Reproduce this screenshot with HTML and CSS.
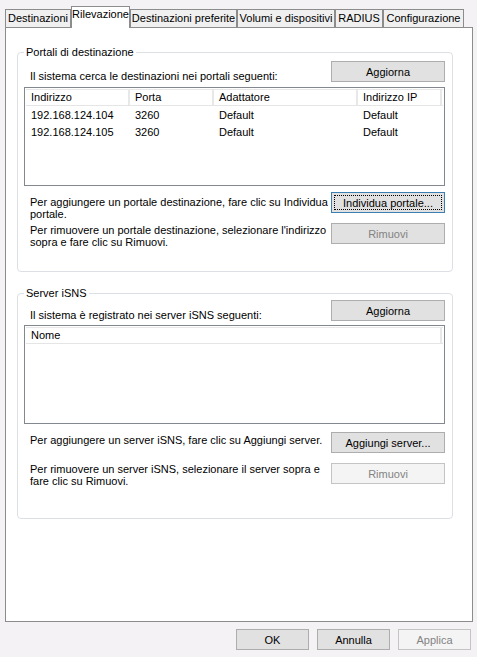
FILE: index.html
```html
<!DOCTYPE html>
<html lang="it">
<head>
<meta charset="utf-8">
<title>Proprietà Iniziatore iSCSI</title>
<link rel="stylesheet" href="styles.css">
</head>
<body>
<div class="dialog">
  <div class="tabs">
    <div class="tab t1">Destinazioni</div>
    <div class="tab t2 active">Rilevazione</div>
    <div class="tab t3">Destinazioni preferite</div>
    <div class="tab t4">Volumi e dispositivi</div>
    <div class="tab t5">RADIUS</div>
    <div class="tab t6">Configurazione</div>
  </div>
  <div class="panel">
    <fieldset class="group g1">
      <legend>Portali di destinazione</legend>
      <div class="row top-row r1">
        <span class="label">Il sistema cerca le destinazioni nei portali seguenti:</span>
        <button class="btn">Aggiorna</button>
      </div>
      <div class="list list-a">
        <div class="lrow lhead cols4">
          <span class="cell">Indirizzo</span>
          <span class="cell">Porta</span>
          <span class="cell">Adattatore</span>
          <span class="cell">Indirizzo IP</span>
        </div>
        <div class="lrow cols4">
          <span class="cell">192.168.124.104</span>
          <span class="cell">3260</span>
          <span class="cell">Default</span>
          <span class="cell">Default</span>
        </div>
        <div class="lrow cols4">
          <span class="cell">192.168.124.105</span>
          <span class="cell">3260</span>
          <span class="cell">Default</span>
          <span class="cell">Default</span>
        </div>
      </div>
      <div class="row action-row first-a">
        <span class="label text-a">Per aggiungere un portale destinazione, fare clic su Individua<br>portale.</span>
        <button class="btn focused"><span class="focus-rect">Individua portale...</span></button>
      </div>
      <div class="row action-row gap10">
        <span class="label text-b">Per rimuovere un portale destinazione, selezionare l'indirizzo<br>sopra e fare clic su Rimuovi.</span>
        <button class="btn dim">Rimuovi</button>
      </div>
    </fieldset>

    <fieldset class="group g2">
      <legend>Server iSNS</legend>
      <div class="row top-row r2">
        <span class="label">Il sistema è registrato nei server iSNS seguenti:</span>
        <button class="btn">Aggiorna</button>
      </div>
      <div class="list">
        <div class="lrow lhead cols1">
          <span class="cell">Nome</span>
        </div>
      </div>
      <div class="row action-row">
        <span class="label text-c">Per aggiungere un server iSNS, fare clic su Aggiungi server.</span>
        <button class="btn">Aggiungi server...</button>
      </div>
      <div class="row action-row gap10">
        <span class="label text-d">Per rimuovere un server iSNS, selezionare il server sopra e<br>fare clic su Rimuovi.</span>
        <button class="btn disabled">Rimuovi</button>
      </div>
    </fieldset>
  </div>
  <div class="footer">
    <button class="btn fbtn">OK</button>
    <button class="btn fbtn">Annulla</button>
    <button class="btn fbtn disabled">Applica</button>
  </div>
</div>
</body>
</html>
```

FILE: styles.css
```css
* { box-sizing: border-box; }

html, body {
  margin: 0;
  padding: 0;
  background: #f5f2f5;
}

body {
  font-family: "Liberation Sans", Arial, sans-serif;
  font-size: 11px;
  color: #000;
  width: 477px;
  height: 657px;
  overflow: hidden;
}

.dialog {
  display: flex;
  flex-direction: column;
}

/* Tabs */
.tabs {
  display: flex;
  align-items: flex-end;
  height: 27px;
  padding-left: 5px;
}

.tab {
  height: 18px;
  border: 1px solid #8c8c8c;
  border-bottom: none;
  background: #f0f0f0;
  line-height: 16px;
  text-align: center;
  white-space: nowrap;
}

.tab.active {
  height: 22px;
  margin-bottom: -1px;
  background: #fff;
  position: relative;
  z-index: 2;
  line-height: 15px;
}

.t1 { width: 66px; }
.t2 { width: 59px; }
.t3 { width: 107px; }
.t4 { width: 98px; }
.t5 { width: 48px; }
.t6 { width: 81px; }

/* Panel */
.panel {
  margin-left: 5px;
  width: 468px;
  height: 595px;
  border: 1px solid #8c8c8c;
  background: #fff;
  padding: 18px 0 0 11px;
  position: relative;
  z-index: 1;
}

.group {
  width: 436px;
  margin: 0;
  padding: 0 7px 27px 6px;
  border: 1px solid #dcdfe4;
  border-radius: 4px;
  min-width: 0;
}

.group legend {
  padding: 0 2px;
  line-height: 13px;
  height: 13px;
}

.g2 {
  margin-top: 15px;
  padding-bottom: 34px;
}

.row {
  display: flex;
  justify-content: space-between;
  white-space: nowrap;
}

.top-row { align-items: flex-end; }
.r1 { margin-top: 2px; }
.r2 { margin-top: 0; }

.top-row .label {
  line-height: 13px;
  margin-bottom: -1px;
}

.label {
  padding-left: 6px;
  line-height: 12px;
}

.action-row {
  align-items: flex-start;
  height: 21px;
  margin-top: 8px;
}

.action-row.first-a { margin-top: 6px; }
.action-row.gap10 { margin-top: 10px; }

.text-a { margin-top: 4px; }
.text-b { margin-top: 1px; }
.text-c { margin-top: 2px; }
.text-d { margin-top: 0; }

/* Buttons */
.btn {
  flex: none;
  width: 114px;
  height: 21px;
  padding: 0;
  border: 1px solid #adadad;
  background: #e1e1e1;
  font-family: inherit;
  font-size: 11px;
  color: #000;
  display: flex;
  align-items: center;
  justify-content: center;
}

.btn.focused {
  border-color: #3c7fb1;
  padding: 2px;
}

.focus-rect {
  display: flex;
  align-items: center;
  justify-content: center;
  width: 100%;
  height: 100%;
  border: 1px dotted #000;
}

.btn.dim {
  color: #838383;
}

.btn.disabled {
  background: #f4f4f4;
  border-color: #c4c4c4;
  color: #838383;
}

/* Lists */
.list {
  margin-top: 4px;
  height: 99px;
  border: 1px solid #828790;
  background: #fff;
  padding: 1px;
}

.list-a { margin-top: 5px; }

.lrow {
  display: grid;
  height: 17px;
  align-items: center;
}

.cols4 { grid-template-columns: 104px 84px 144px 84px; }
.cols1 { grid-template-columns: 416px; }

.lhead {
  border-top: 1px solid #e8e8e8;
  border-bottom: 1px solid #e5e5e5;
}

.lhead .cell {
  border-right: 2px solid #e8e8e8;
  height: 100%;
  line-height: 14px;
}

.cell {
  padding-left: 5px;
  white-space: nowrap;
  overflow: hidden;
}

/* Footer */
.footer {
  display: flex;
  justify-content: flex-end;
  gap: 8px;
  padding-right: 6px;
  margin-top: 7px;
}

.fbtn { width: 73px; }
```
